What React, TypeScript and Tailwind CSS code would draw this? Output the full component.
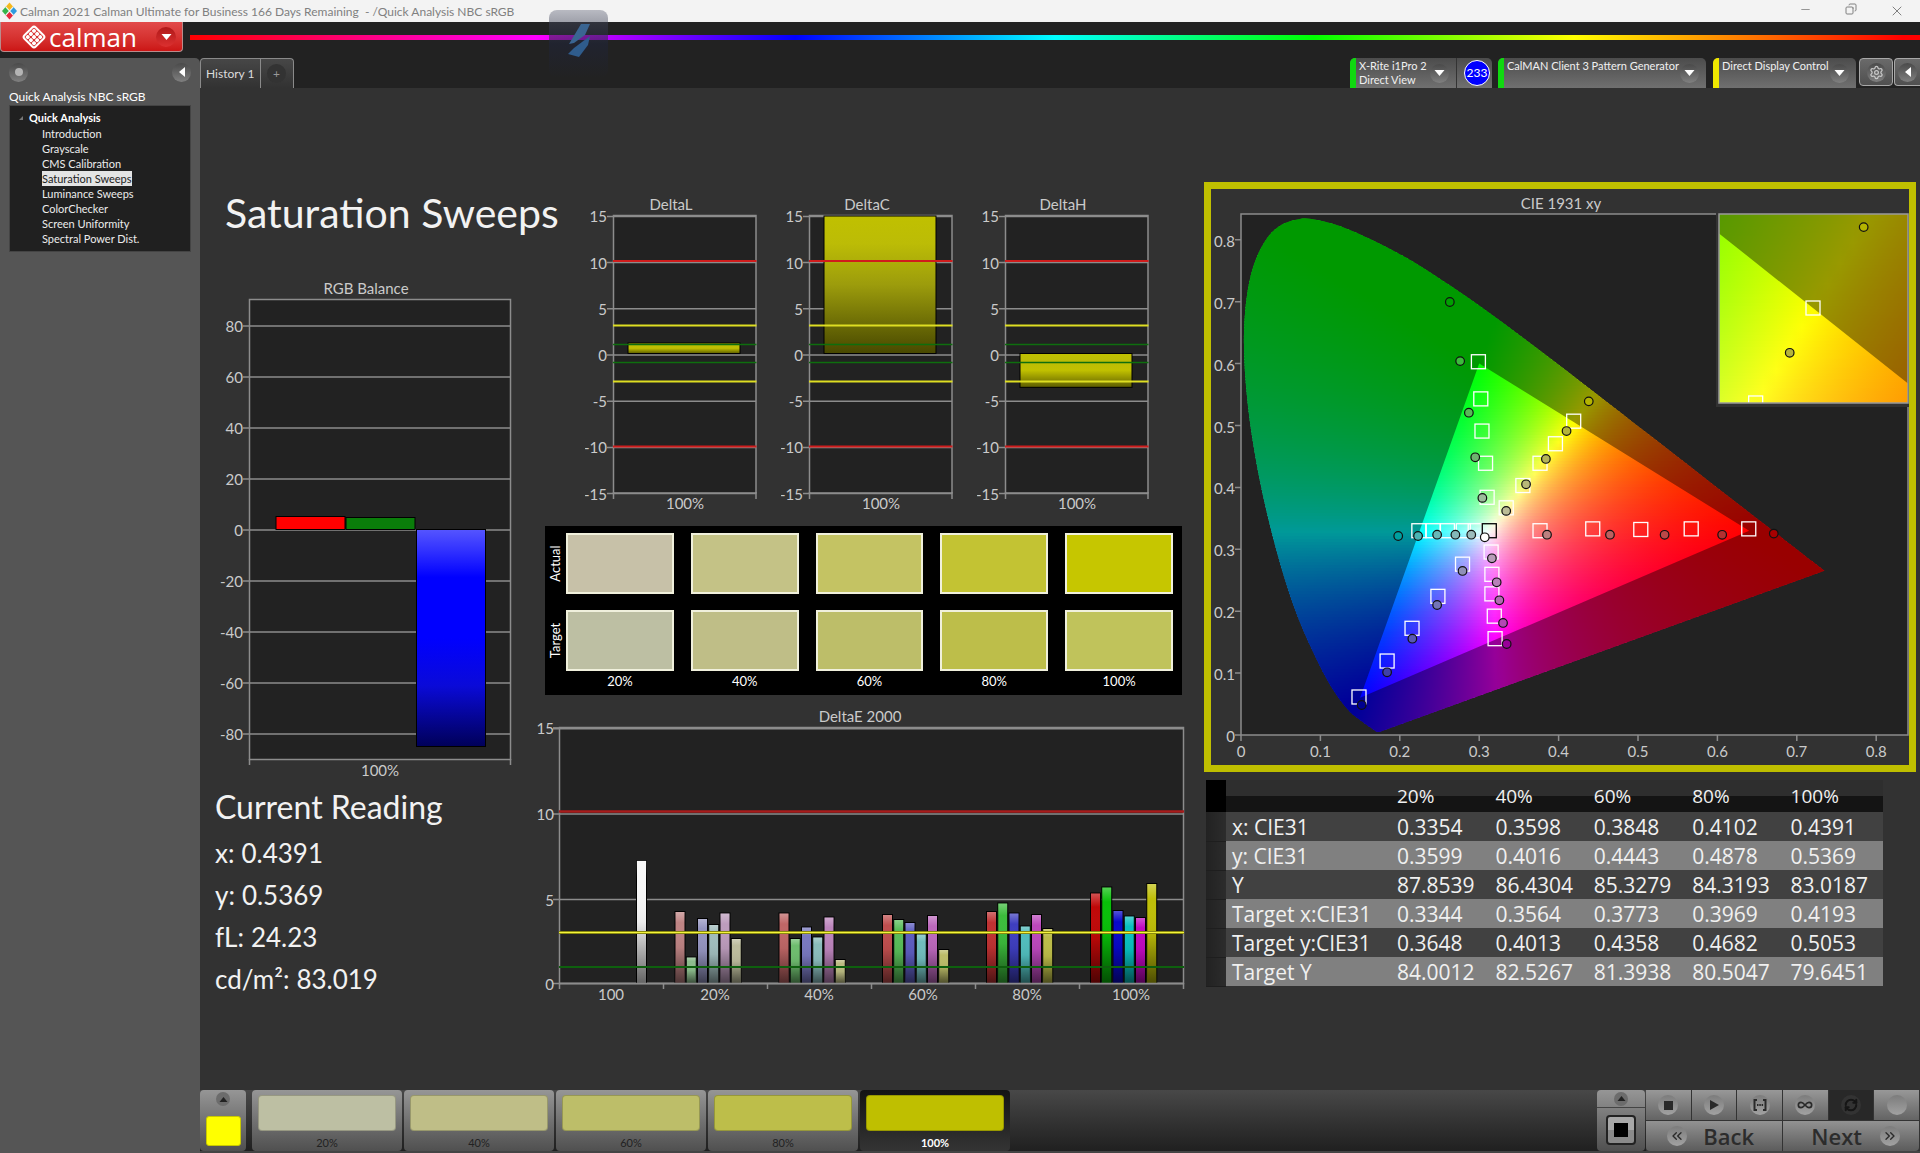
import React from 'react';
import { Copy, Infinity as InfinityIcon, Minus, RefreshCw, Settings, X, ChevronsLeft, ChevronsRight } from 'lucide-react';

const sections = [
  'Introduction',
  'Grayscale',
  'CMS Calibration',
  'Saturation Sweeps',
  'Luminance Sweeps',
  'ColorChecker',
  'Screen Uniformity',
  'Spectral Power Dist.',
];

const levels = ['20%', '40%', '60%', '80%', '100%'];
const actualColors = ['#c7c1a8', '#c4c286', '#c4c363', '#c3c333', '#c6c600'];
const targetColors = ['#bdbfa3', '#bfbe87', '#bdbe69', '#bdbe4a', '#c0c35b'];
const stepColors = ['#bdbfa3', '#bfbe87', '#bdbe69', '#bdbe4a', '#bfbf00'];

const tableRows = [
  ['x: CIE31', '0.3354', '0.3598', '0.3848', '0.4102', '0.4391'],
  ['y: CIE31', '0.3599', '0.4016', '0.4443', '0.4878', '0.5369'],
  ['Y', '87.8539', '86.4304', '85.3279', '84.3193', '83.0187'],
  ['Target x:CIE31', '0.3344', '0.3564', '0.3773', '0.3969', '0.4193'],
  ['Target y:CIE31', '0.3648', '0.4013', '0.4358', '0.4682', '0.5053'],
  ['Target Y', '84.0012', '82.5267', '81.3938', '80.5047', '79.6451'],
];

const readings = [
  ['x:', '0.4391'],
  ['y:', '0.5369'],
  ['fL:', '24.23'],
  ['cd/m²:', '83.019'],
];

/* ---------- Window chrome ---------- */

const TitleBar: React.FC = () => (
  <div className="flex h-[22px] items-center bg-[#f3f3f3] pl-[2px] text-[#808080]">
    <svg className="h-[18px] w-[15px]" viewBox="0 0 16 18" aria-hidden="true">
      <path d="M8 0l4 4.500-4 4.500-4-4.500z" fill="#f5b81c" />
      <path d="M4 4.500l4 4.500-4 4.500-4-4.500z" fill="#35b34a" />
      <path d="M12 4.500l4 4.500-4 4.500-4-4.500z" fill="#2f9be0" />
      <path d="M8 9l4 4.500-4 4.500-4-4.500z" fill="#e5283c" />
      <path d="M4 4.500l8 9M12 4.500l-8 9" stroke="#f3f3f3" strokeWidth="1.200" />
    </svg>
    <span className="ml-[3px] flex-1 whitespace-pre pt-px text-[12px]">
      Calman 2021 Calman Ultimate for Business 166 Days Remaining  - /Quick Analysis NBC sRGB
    </span>
    <div className="flex">
      <button aria-label="Minimize" className="flex w-[46px] justify-center"><Minus size={13} strokeWidth={1.5} /></button>
      <button aria-label="Restore" className="flex w-[46px] justify-center"><Copy size={12} strokeWidth={2} className="rotate-90" /></button>
      <button aria-label="Close" className="flex w-[46px] justify-center"><X size={16} strokeWidth={1.5} /></button>
    </div>
  </div>
);

const Round: React.FC<{ children?: React.ReactNode }> = ({ children }) => (
  <span className="flex size-[19px] shrink-0 items-center justify-center rounded-full bg-linear-to-b from-[#4a4a4a] to-[#808080]">
    {children}
  </span>
);

const Caret: React.FC = () => (
  <svg className="h-[6px] w-[11px]" viewBox="0 0 10 6" aria-hidden="true">
    <path d="M0 0h10l-5 6z" fill="#fff" />
  </svg>
);

const LeftArrow: React.FC = () => (
  <svg className="h-[10px] w-[6px]" viewBox="0 0 6 10" aria-hidden="true">
    <path d="M6 0v10l-6-5z" fill="#fff" />
  </svg>
);

const LogoMark: React.FC = () => (
  <svg className="size-[24px]" viewBox="0 0 24 24" aria-hidden="true">
    <g transform="rotate(45 12 12)">
      <rect x="4" y="4" width="16" height="16" rx="2.500" fill="none" stroke="#fff" strokeWidth="2" />
      {[5.8, 10.2, 14.6].map((x) =>
        [5.8, 10.2, 14.6].map((y) => <rect key={`${x}-${y}`} x={x} y={y} width="3.700" height="3.700" rx="1.300" fill="#fff" />),
      )}
    </g>
  </svg>
);

const DeviceTab: React.FC<{ name: string; mode?: string; accent: string; className: string }> = ({ name, mode, accent, className }) => (
  <button className={`flex h-[30px] items-stretch overflow-hidden rounded-t-[5px] bg-linear-to-b from-[#4c4c4c] to-[#707070] text-left ${className}`}>
    <span className={`w-[6px] ${accent}`} />
    <span className="flex-1 whitespace-nowrap pl-[3px] pt-px text-[11px] leading-[14px] text-[#f0f0f0]">
      {name}
      <br />
      {mode}
    </span>
    <span className="flex items-center pr-[7px]"><Round><Caret /></Round></span>
  </button>
);

const Header: React.FC = () => (
  <header className="relative flex h-9">
    <button className="flex h-[30px] w-[183px] items-center rounded-b-[4px] border border-t-0 border-[#b98c8c] bg-linear-to-b from-[#e24a4a] to-[#cc1414] pl-[21px] text-white">
      <LogoMark />
      <span className="ml-[3px] flex-1 text-left font-['Open_Sans',sans-serif] text-[26px] leading-[26px]">calman</span>
      <span className="mr-[6px] flex size-[20px] items-center justify-center rounded-full bg-linear-to-b from-[#b01818] to-[#dc3030]"><Caret /></span>
    </button>
    <div className="ml-[7px] mt-[13px] h-[5px] flex-1 bg-[linear-gradient(90deg,#ff0000_0%,#ff00ff_20%,#0000ff_35%,#00ffff_50%,#00ff00_65%,#ffff00_80%,#ff0000_99%)]" />
    {/* Floating recorder badge, hangs over the title bar */}
    <div className="absolute -top-3 left-[549px] flex h-[68px] w-[59px] justify-center rounded-[8px] bg-linear-to-b from-[#606478]/40 via-[#202438]/60 to-[#202228]/0 pt-[14px]">
      <svg className="h-[33px] w-[26px]" viewBox="0 0 26 33" aria-hidden="true">
        <path d="M15 0h9l-5 11-11 8-5 1z" fill="#3a6592" />
        <path d="M24 12l-2 9-9 12-11-3 6-6z" fill="#2f5c8c" />
      </svg>
    </div>
  </header>
);

const Toolbar: React.FC = () => (
  <div className="flex h-[30px] justify-between">
    <div className="flex rounded-t-[4px] border border-b-0 border-[#8a8a8a] bg-linear-to-b from-[#474747] to-[#323232] text-[12px] text-[#dcdcdc]">
      <button className="border-r border-[#8a8a8a] px-[5px]">History 1</button>
      <button aria-label="Add history" className="flex w-[32px] items-center justify-center">
        <span className="flex size-[19px] items-center justify-center rounded-full bg-[#333333] text-[#999999]">+</span>
      </button>
    </div>
    <div className="flex">
      <DeviceTab name="X-Rite i1Pro 2" mode="Direct View" accent="bg-[#10d810]" className="w-[106px] rounded-tr-none" />
      <span className="flex w-[36px] items-center justify-end rounded-tr-[5px] border-l border-[#333333] bg-linear-to-b from-[#4c4c4c] to-[#707070] pr-[2px]">
        <span className="flex size-[26px] items-center justify-center rounded-full border border-white bg-[#0000ff] text-[12px] text-white">233</span>
      </span>
      <DeviceTab name="CalMAN Client 3 Pattern Generator" accent="bg-[#10d810]" className="ml-[6px] w-[208px]" />
      <DeviceTab name="Direct Display Control" accent="bg-[#f0e800]" className="ml-[7px] w-[143px]" />
      <button aria-label="Settings" className="ml-[3px] flex h-[28px] w-[34px] items-center justify-center rounded-[4px] border border-[#a8a8a8] bg-linear-to-b from-[#6a6a6a] to-[#505050]">
        <Round><Settings size={15} color="#c8c8c8" /></Round>
      </button>
      <button aria-label="Collapse toolbar" className="ml-px flex h-[28px] w-[26px] items-center justify-center rounded-l-[4px] border border-r-0 border-[#a8a8a8] bg-linear-to-b from-[#6a6a6a] to-[#505050]">
        <Round><LeftArrow /></Round>
      </button>
    </div>
  </div>
);

const Sidebar: React.FC = () => (
  <aside className="w-[200px] shrink-0 rounded-tr-[5px] bg-[#555555] px-[9px]">
    <div className="flex h-[28px] items-center justify-between">
      <Round><span className="size-[8px] rounded-full bg-[#b4b4b4]" /></Round>
      <button aria-label="Collapse sidebar"><Round><LeftArrow /></Round></button>
    </div>
    <h2 className="mt-[2px] text-[12px] leading-[17px] text-white">Quick Analysis NBC sRGB</h2>
    <nav className="h-[147px] border border-[#444444] bg-[#202020] pt-1 text-[11px] text-[#ececec]">
      <div className="flex items-center pl-[9px] font-bold leading-[16px] text-white">
        <svg className="mr-[6px] size-[4px]" viewBox="0 0 4 4" aria-hidden="true"><path d="M4 0v4h-4z" fill="#777" /></svg>
        Quick Analysis
      </div>
      <ul className="pl-[32px]">
        {sections.map((name) => (
          <li key={name} className="h-[15px] leading-[15px]">
            <a href="#" className={name === 'Saturation Sweeps' ? 'inline-block bg-[#e4e4e4] text-[#222222]' : ''}>{name}</a>
          </li>
        ))}
      </ul>
    </nav>
  </aside>
);

/* ---------- Charts ---------- */

const axis = '#8c8c8c';

const Label: React.FC<{ x: number; y: number; anchor?: 'middle' | 'end'; children: React.ReactNode }> = ({ x, y, anchor = 'middle', children }) => (
  <text x={x} y={y} textAnchor={anchor} fill="#cacaca" className="text-[15px]">{children}</text>
);

const RgbBalance: React.FC = () => {
  const y = (v: number) => 258 - v * 2.55;
  return (
    <svg className="block w-full" viewBox="0 0 337 512" role="img" aria-label="RGB Balance">
      <defs>
        <linearGradient id="blueBar" x2="0" y2="1">
          <stop offset="0" stopColor="#5555ff" />
          <stop offset="0.1" stopColor="#3030ff" />
          <stop offset="0.22" stopColor="#0000ff" />
          <stop offset="0.5" stopColor="#0000ff" />
          <stop offset="0.72" stopColor="#0a0ad8" />
          <stop offset="1" stopColor="#000058" />
        </linearGradient>
      </defs>
      <Label x={166} y={22}>RGB Balance</Label>
      <rect x="49.500" y="27.500" width="261" height="460" fill="#222" stroke={axis} strokeWidth="1.500" />
      {[80, 60, 40, 20, 0, -20, -40, -60, -80].map((v) => (
        <g key={v}>
          <path d={`M43 ${y(v)}H310`} stroke={axis} strokeWidth="1.500" />
          <Label x={43} y={y(v) + 6} anchor="end">{v}</Label>
        </g>
      ))}
      <path d="M49.500 487v6M310.500 487v6" stroke={axis} strokeWidth="1.500" />
      <rect x="76" y="244.500" width="69" height="13" fill="#f00" stroke="#000" />
      <rect x="146" y="245.500" width="69" height="12" fill="#0a7d0a" stroke="#000" />
      <rect x="216.500" y="257.500" width="69" height="217" fill="url(#blueBar)" stroke="#000" />
      <Label x={180} y={504}>100%</Label>
    </svg>
  );
};

const DeltaChart: React.FC<{ title: string; value: number }> = ({ title, value }) => {
  const y = (v: number) => 161 - v * 9.24;
  const top = value > 0 ? Math.max(y(value), 22) : 159.5;
  const bottom = value > 0 ? 159.5 : y(value);
  return (
    <svg className="block w-full" viewBox="0 0 196 322" role="img" aria-label={title}>
      <defs>
        <linearGradient id={`${title}Bar`} x2="0" y2="1">
          <stop offset="0" stopColor="#c0c000" />
          <stop offset="0.2" stopColor="#bcbc06" />
          <stop offset="0.5" stopColor={value > 10 ? '#9c9c0c' : '#c0c000'} />
          <stop offset="1" stopColor={value > 10 ? '#484800' : '#5c5c00'} />
        </linearGradient>
      </defs>
      <Label x={86} y={16}>{title}</Label>
      <rect x="28.500" y="21.500" width="142.500" height="277.500" fill="#222" stroke={axis} strokeWidth="1.500" />
      {[15, 10, 5, 0, -5, -10, -15].map((v) => (
        <g key={v}>
          <path d={`M22 ${y(v)}H171`} stroke={axis} strokeWidth="1.500" />
          <Label x={22} y={y(v) + 6} anchor="end">{v}</Label>
        </g>
      ))}
      <path d="M28.500 298v7M171 298v7" stroke={axis} strokeWidth="1.500" />
      <rect x="43" y={top} width="112" height={bottom - top} fill={`url(#${title}Bar)`} stroke="#000" />
      <path d="M28 67H171.500M28 252.500H171.500" stroke="#d01c1c" strokeWidth="2" />
      <path d="M28 131.500H171.500M28 187.500H171.500" stroke="#dede22" strokeWidth="2" />
      <path d="M28 150.500H171.500M28 168.500H171.500" stroke="#0e6e0e" strokeWidth="1.500" />
      <Label x={100} y={315}>100%</Label>
    </svg>
  );
};

const SwatchRow: React.FC<{ label: string; colors: string[] }> = ({ label, colors }) => (
  <div className="flex h-[61px]">
    <div className="flex w-[21px] items-center justify-center">
      <span className="-rotate-90 text-[13px] leading-none text-white">{label}</span>
    </div>
    <div className="grid flex-1 grid-cols-5 gap-[17px]">
      {colors.map((c) => (
        <div key={c} className="border-2 border-[#f0f0dc]" style={{ backgroundColor: c }} />
      ))}
    </div>
  </div>
);

const Swatches: React.FC = () => (
  <div className="ml-2 mr-[22px] mt-[10px] bg-black pb-[5px] pr-[9px] pt-[7px]">
    <SwatchRow label="Actual" colors={actualColors} />
    <div className="h-4" />
    <SwatchRow label="Target" colors={targetColors} />
    <div className="grid grid-cols-5 gap-[17px] pl-[21px] pt-px text-center text-[13px] leading-[18px] text-white">
      {levels.map((l) => <span key={l}>{l}</span>)}
    </div>
  </div>
);

const deltaE = [
  { x: 138, tops: [213.5, 259, 220.5, 226.5, 215, 240.5], colors: ['#bf8484', '#8cbc8c', '#9494bf', '#a0bcbc', '#bc9cbc', '#bcbc9c'] },
  { x: 242, tops: [215, 240.5, 229, 239, 219, 261.5], colors: ['#bf6666', '#6ebc6e', '#7878bf', '#8abcbc', '#bc84bc', '#bcbc82'] },
  { x: 345.5, tops: [216.5, 221.5, 224.5, 236, 217.5, 251.5], colors: ['#bf4e4e', '#58bc58', '#5c5cbf', '#70bcbc', '#bc68bc', '#bcbc68'] },
  { x: 449.5, tops: [213.5, 205, 215, 228, 216.5, 230.5], colors: ['#bf3232', '#3cbc3c', '#3e3ebf', '#50bcbc', '#bc48bc', '#bcbc48'] },
  { x: 553.5, tops: [195, 189, 212.5, 218, 219.5, 185.5], colors: ['#bf0808', '#08bf08', '#0808c8', '#08bfbf', '#bf08bf', '#bfbf08'] },
];

const DeltaE2000: React.FC = () => (
  <svg className="mt-[3px] block w-full" viewBox="0 0 667 310" role="img" aria-label="DeltaE 2000">
    <defs>
      <linearGradient id="shade" x2="0" y2="1">
        <stop offset="0" stopColor="#fff" stopOpacity="0.3" />
        <stop offset="0.15" stopColor="#fff" stopOpacity="0" />
        <stop offset="0.5" stopColor="#000" stopOpacity="0.05" />
        <stop offset="1" stopColor="#000" stopOpacity="0.6" />
      </linearGradient>
    </defs>
    <Label x={323} y={24}>DeltaE 2000</Label>
    <rect x="22.500" y="29.500" width="624" height="256" fill="#222" stroke={axis} strokeWidth="1.500" />
    <path d="M16 30.500H647" stroke={axis} strokeWidth="2" />
    {[[15, 30], [10, 116], [5, 201.5], [0, 285.5]].map(([v, y]) => (
      <g key={v}>
        <path d={`M16 ${y}H646`} stroke={axis} strokeWidth="1.500" />
        <Label x={17} y={y + 6} anchor="end">{v}</Label>
      </g>
    ))}
    <rect x="99.500" y="162.500" width="10" height="123" fill="#f8f8f8" stroke="#000" />
    <rect x="99.500" y="162.500" width="10" height="123" fill="url(#shade)" />
    {deltaE.map((group) =>
      group.tops.map((top, i) => (
        <g key={`${group.x}-${i}`}>
          <rect x={group.x + i * 11.25} y={top} width="10" height={285.5 - top} fill={group.colors[i]} stroke="#000" />
          <rect x={group.x + i * 11.25 + 0.5} y={top + 0.5} width="9" height={285 - top} fill="url(#shade)" />
        </g>
      )),
    )}
    <path d="M22 113.500H647" stroke="#a81c1c" strokeWidth="2.500" />
    <path d="M22 234.500H647" stroke="#6a6a00" strokeWidth="3" />
    <path d="M22 234.500H647" stroke="#f4f43c" strokeWidth="1.400" />
    <path d="M22 269H647" stroke="#0e600e" strokeWidth="2" />
    <path d="M22 285.500H647" stroke={axis} strokeWidth="1.500" />
    {[0, 1, 2, 3, 4, 5, 6].map((i) => (
      <path key={i} d={`M${22.5 + i * 104} 285v6`} stroke={axis} strokeWidth="1.500" />
    ))}
    {['100', ...levels].map((l, i) => (
      <Label key={l} x={74 + i * 104} y={302}>{l}</Label>
    ))}
  </svg>
);

/* ---------- CIE diagram ---------- */

const locus = [
  [0.1741, 0.005], [0.1714, 0.0051], [0.1689, 0.0069], [0.1644, 0.0109], [0.1566, 0.0177], [0.144, 0.0297],
  [0.1355, 0.0399], [0.1241, 0.0578], [0.1096, 0.0868], [0.0913, 0.1327], [0.0687, 0.2007], [0.0454, 0.295],
  [0.0235, 0.4127], [0.0082, 0.5384], [0.0039, 0.6548], [0.0139, 0.7502], [0.0389, 0.812], [0.0743, 0.8338],
  [0.1142, 0.8262], [0.1547, 0.8059], [0.1929, 0.7816], [0.2296, 0.7543], [0.3016, 0.6923], [0.3731, 0.6245],
  [0.4441, 0.5547], [0.5125, 0.4866], [0.5752, 0.4242], [0.627, 0.3725], [0.6658, 0.334], [0.6915, 0.3083],
  [0.719, 0.2809], [0.7347, 0.2653],
];
const gamut = [[0.64, 0.33], [0.3, 0.6], [0.15, 0.06]];

// RGB of a chromaticity, scaled so its largest channel is full
const chroma = (x: number, y: number) => {
  const yy = Math.max(y, 0.001);
  const X = x / yy;
  const Z = (1 - x - yy) / yy;
  const rgb = [
    3.2406 * X - 1.5372 - 0.4986 * Z,
    -0.9689 * X + 1.8758 + 0.0415 * Z,
    0.0557 * X - 0.204 + 1.057 * Z,
  ].map((c) => Math.max(c, 0));
  const peak = Math.max(...rgb);
  return `rgb(${rgb.map((c) => Math.round((255 * c) / peak)).join(',')})`;
};

interface Scale {
  x: (v: number) => number;
  y: (v: number) => number;
}

const toPath = (points: number[][], s: Scale) => `M${points.map(([x, y]) => `${s.x(x).toFixed(2)} ${s.y(y).toFixed(2)}`).join('L')}Z`;

// Smooth closed curve; the purple line between the two ends stays straight
const toCurve = (p: number[][], s: Scale) => {
  const q = p.map(([x, y]) => [s.x(x), s.y(y)]);
  let d = `M${q[0].join(' ')}`;
  for (let i = 0; i < q.length - 1; i++) {
    const a = q[Math.max(i - 1, 0)];
    const b = q[i];
    const c = q[i + 1];
    const e = q[Math.min(i + 2, q.length - 1)];
    d += `C${b[0] + (c[0] - a[0]) / 6} ${b[1] + (c[1] - a[1]) / 6} ${c[0] - (e[0] - b[0]) / 6} ${c[1] - (e[1] - b[1]) / 6} ${c[0]} ${c[1]}`;
  }
  return `${d}Z`;
};

interface FieldProps {
  id: string;
  scale: Scale;
  xRange: [number, number];
  yRange: [number, number];
  rows: number;
  cols: number;
}

const ChromaField: React.FC<FieldProps> = ({ id, scale, xRange, yRange, rows, cols }) => {
  const [x0, x1] = xRange;
  const [y0, y1] = yRange;
  const step = (y1 - y0) / rows;
  const height = scale.y(0) - scale.y(step);
  return (
    <g>
      <defs>
        <clipPath id={`${id}Locus`}><path d={toCurve(locus, scale)} /></clipPath>
      </defs>
      <g clipPath={`url(#${id}Locus)`}>
        {Array.from({ length: rows }, (_, r) => {
          const y = y0 + (r + 0.5) * step;
          return (
            <g key={r}>
              <linearGradient id={`${id}${r}`}>
                {Array.from({ length: cols + 1 }, (_, c) => (
                  <stop key={c} offset={c / cols} stopColor={chroma(x0 + ((x1 - x0) * c) / cols, y)} />
                ))}
              </linearGradient>
              <rect x={scale.x(x0)} y={scale.y(y + step / 2) - 0.5} width={scale.x(x1) - scale.x(x0)} height={height + 1} fill={`url(#${id}${r})`} />
            </g>
          );
        })}
        <path d={`M-3000 -3000H6000V6000H-3000Z${toPath(gamut, scale)}`} fillRule="evenodd" fill="#000" fillOpacity="0.4" />
      </g>
    </g>
  );
};

const targets = [
  [0.299, 0.603], [0.302, 0.543], [0.3035, 0.491], [0.308, 0.439], [0.31, 0.384],
  [0.419, 0.507], [0.396, 0.4705], [0.3766, 0.439], [0.355, 0.403], [0.334, 0.367],
  [0.3766, 0.33], [0.443, 0.333], [0.5035, 0.332], [0.567, 0.333], [0.6395, 0.333],
  [0.224, 0.33], [0.242, 0.33], [0.26, 0.33], [0.28, 0.33], [0.295, 0.33],
  [0.315, 0.2956], [0.316, 0.2596], [0.316, 0.228], [0.319, 0.192], [0.32, 0.1556],
  [0.279, 0.276], [0.248, 0.224], [0.2154, 0.1724], [0.184, 0.1195], [0.1486, 0.0614],
];

const measured: [number, number, string][] = [
  [0.263, 0.6995, '#00a000'], [0.276, 0.604, '#3cbc3c'], [0.287, 0.5207, '#58b858'], [0.295, 0.4486, '#6eb46e'], [0.304, 0.383, '#9cbc9c'],
  [0.438, 0.539, '#b4b400'], [0.41, 0.491, '#b4b43c'], [0.384, 0.446, '#b4b458'], [0.359, 0.405, '#b8b878'], [0.334, 0.362, '#bcbc96'],
  [0.198, 0.3215, '#00a0a0'], [0.223, 0.3215, '#48b4b4'], [0.247, 0.3236, '#68b8b8'], [0.27, 0.3236, '#84b8b8'], [0.29, 0.3236, '#9cbcbc'],
  [0.3854, 0.3236, '#bc8080'], [0.4647, 0.3236, '#bc6060'], [0.5335, 0.3234, '#bc4848'], [0.606, 0.3234, '#b43030'], [0.671, 0.3254, '#a80000'],
  [0.316, 0.2855, '#b89cb8'], [0.322, 0.2467, '#b880b8'], [0.3254, 0.2176, '#b468b4'], [0.33, 0.181, '#b448b4'], [0.3346, 0.147, '#980098'],
  [0.279, 0.265, '#9090b8'], [0.247, 0.21, '#7474b8'], [0.2158, 0.1556, '#5858b4'], [0.184, 0.1013, '#4040a8'], [0.152, 0.0485, '#000090'],
  [0.307, 0.3194, '#ffffff'],
];

const TargetMark: React.FC<{ x: number; y: number; color?: string }> = ({ x, y, color = '#fff' }) => (
  <rect x={x - 7} y={y - 7} width="14" height="14" fill="none" stroke={color} strokeWidth="1.300" />
);

const MeasuredMark: React.FC<{ x: number; y: number; fill: string }> = ({ x, y, fill }) => (
  <circle cx={x} cy={y} r="4.300" fill={fill} stroke="#111" strokeWidth="1.200" />
);

const CieDiagram: React.FC = () => {
  const main: Scale = { x: (v) => 30 + v * 794, y: (v) => 546 - v * 619 };
  const zoom: Scale = { x: (v) => 602 + (v - 0.4193) * 2560, y: (v) => 119 - (v - 0.5053) * 2560 };
  return (
    <div className="mr-1 border-[7px] border-[#bfbf00]">
      <svg className="block w-full" viewBox="0 0 698 576" role="img" aria-label="CIE 1931 xy">
        <defs>
          <clipPath id="insetArea"><rect x="508" y="25" width="189" height="189" /></clipPath>
        </defs>
        <Label x={350} y={20}>CIE 1931 xy</Label>
        <rect x="30" y="25" width="667" height="521" fill="#222" stroke={axis} strokeWidth="1.500" />
        <ChromaField id="cie" scale={main} xRange={[0, 0.75]} yRange={[0, 0.84]} rows={180} cols={75} />
        {Array.from({ length: 9 }, (_, i) => (
          <g key={i}>
            <path d={`M${main.x(i / 10)} 546v6M24 ${main.y(i / 10)}h6`} stroke={axis} strokeWidth="1.500" />
            <Label x={main.x(i / 10)} y={568}>{i / 10}</Label>
            <Label x={24} y={main.y(i / 10) + 7} anchor="end">{i / 10}</Label>
          </g>
        ))}
        {targets.map(([x, y]) => <TargetMark key={`${x}-${y}`} x={main.x(x)} y={main.y(y)} />)}
        <TargetMark x={main.x(0.3127)} y={main.y(0.33)} color="#000" />
        {measured.map(([x, y, fill]) => <MeasuredMark key={`${x}-${y}`} x={main.x(x)} y={main.y(y)} fill={fill} />)}

        <rect x="505" y="22" width="193" height="196" fill="#323232" />
        <g clipPath="url(#insetArea)">
          <ChromaField id="zoom" scale={zoom} xRange={[0.38, 0.46]} yRange={[0.464, 0.544]} rows={70} cols={16} />
          <TargetMark x={zoom.x(0.4193)} y={zoom.y(0.5053)} />
          <TargetMark x={zoom.x(0.3969)} y={zoom.y(0.4682)} />
          <MeasuredMark x={zoom.x(0.4391)} y={zoom.y(0.5369)} fill="#b4b400" />
          <MeasuredMark x={zoom.x(0.4102)} y={zoom.y(0.4878)} fill="#b4b43c" />
        </g>
        <rect x="508" y="25" width="189" height="189" fill="none" stroke="#9a9a9a" strokeWidth="1.500" />
      </svg>
    </div>
  );
};

const DataTable: React.FC = () => (
  <table className="ml-[2px] mt-2 w-[calc(100%-39px)] table-fixed border-collapse text-left font-['Open_Sans',sans-serif] text-[21px] leading-[28px] text-[#f0f0f0]">
    <colgroup>
      <col className="w-[20px]" />
      <col className="w-[165px]" />
    </colgroup>
    <thead>
      <tr className="h-8 bg-[linear-gradient(#2e2e2e_50%,#141414_50%)] text-[19px]">
        <td className="bg-black" />
        <td />
        {levels.map((l) => <th key={l} scope="col" className="pl-[6px] font-normal">{l}</th>)}
      </tr>
    </thead>
    <tbody>
      {tableRows.map(([name, ...values], i) => (
        <tr key={name} className={`h-[29px] ${i % 2 ? 'bg-[#808080]' : 'bg-[#414141]'}`}>
          <td className="border-b border-[#1e1e1e] bg-linear-to-r from-[#222222] to-[#2c2c2c]" />
          <th scope="row" className="whitespace-nowrap pl-[6px] font-normal">{name}</th>
          {values.map((v) => <td key={v} className="pl-[6px]">{v}</td>)}
        </tr>
      ))}
    </tbody>
  </table>
);

/* ---------- Bottom bar ---------- */

const Knob: React.FC<{ dark?: boolean; children?: React.ReactNode }> = ({ dark, children }) => (
  <span className={`flex size-[20px] items-center justify-center rounded-full text-[#2a2a2a] ${dark ? 'bg-[#333333]' : 'bg-linear-to-b from-[#7c7c7c] to-[#a2a2a2]'}`}>
    {children}
  </span>
);

const UpArrow: React.FC = () => (
  <span className="flex size-[14px] items-center justify-center rounded-full bg-[#6c6c6c]">
    <svg className="h-[5px] w-[9px]" viewBox="0 0 8 5" aria-hidden="true"><path d="M4 0l4 5h-8z" fill="#222" /></svg>
  </span>
);

const controls = [
  { name: 'Stop', icon: <span className="size-[9px] bg-[#2a2a2a]" /> },
  { name: 'Play', icon: <svg className="size-[10px]" viewBox="0 0 10 10"><path d="M1 0l9 5-9 5z" fill="#2a2a2a" /></svg> },
  {
    name: 'Read series',
    icon: (
      <svg className="h-[12px] w-[14px]" viewBox="0 0 14 12" fill="none" stroke="#2a2a2a" strokeWidth="2">
        <path d="M4 1H1.500v10H4M10 1h2.500v10H10M4 6h1.500M6.300 6h1.500M8.600 6h1.500" />
      </svg>
    ),
  },
  { name: 'Read continuously', icon: <InfinityIcon size={16} strokeWidth={2.5} /> },
  { name: 'Refresh', icon: <RefreshCw size={14} strokeWidth={3.5} color="#161616" />, dark: true },
  { name: 'Record', icon: null },
];

const BottomBar: React.FC = () => (
  <footer className="flex h-[63px] border-b-2 border-[#444444] bg-linear-to-b from-[#484848] to-[#202020]">
    <button aria-label="Pattern color" className="flex w-[46px] flex-col items-center justify-between rounded-[4px] bg-linear-to-b from-[#969696] to-[#505050] pb-[5px] pt-[2px]">
      <UpArrow />
      <span className="h-[30px] w-[35px] rounded-[3px] border border-[#c8c800] bg-[#ffff00]" />
    </button>
    <div className="ml-[6px] flex gap-[2px]">
      {levels.map((l, i) => {
        const active = i === levels.length - 1;
        return (
          <button
            key={l}
            className={`flex w-[150px] flex-col rounded-[4px] px-[6px] pt-[5px] text-center text-[11px] leading-[14px] ${active ? 'bg-linear-to-b from-[#141414] to-[#343434] font-bold text-white' : 'bg-linear-to-b from-[#969696] to-[#505050] text-[#222222]'}`}
          >
            <span className="h-[36px] w-full rounded-[4px] border border-black/20" style={{ backgroundColor: stepColors[i] }} />
            <span className="mt-[5px] w-full">{l}</span>
          </button>
        );
      })}
    </div>
    <div className="ml-auto flex w-[48px] flex-col rounded-[4px] bg-linear-to-b from-[#969696] to-[#505050]">
      <button aria-label="More options" className="flex h-[18px] w-full items-center justify-center border-b border-[#444444]"><UpArrow /></button>
      <button aria-label="Pattern window" className="m-auto flex size-[30px] items-center justify-center rounded-[4px] border-2 border-[#222222] bg-[linear-gradient(#a8a8a8_50%,#8a8a8a_50%)]">
        <span className="size-[14px] bg-black" />
      </button>
    </div>
    <div className="ml-px flex w-[274px] flex-col gap-px bg-[#333333] pr-px">
      <div className="grid h-[30px] grid-cols-6 gap-px">
        {controls.map((c) => (
          <button key={c.name} aria-label={c.name} className={`flex items-center justify-center ${c.dark ? 'bg-[#282828]' : 'bg-linear-to-b from-[#989898] to-[#646464]'}`}>
            <Knob dark={c.dark}>{c.icon}</Knob>
          </button>
        ))}
      </div>
      <div className="grid h-[30px] grid-cols-2 gap-px font-['Open_Sans',sans-serif] text-[22px] font-semibold leading-[28px] text-[#2c2c2c]">
        <button className="flex items-center justify-end gap-[16px] rounded-bl-[4px] bg-linear-to-b from-[#929292] to-[#5c5c5c] pr-[28px]">
          <Knob><ChevronsLeft size={16} /></Knob>Back
        </button>
        <button className="flex items-center justify-end gap-[18px] rounded-br-[4px] bg-linear-to-b from-[#929292] to-[#5c5c5c] pr-[19px]">
          Next<Knob><ChevronsRight size={16} /></Knob>
        </button>
      </div>
    </div>
  </footer>
);

const App: React.FC = () => {
  return (
    <div className="flex min-h-screen flex-col overflow-hidden bg-[#222222] font-['Lato','Liberation_Sans',sans-serif]">
      <TitleBar />
      <Header />
      <div className="flex flex-1">
        <Sidebar />
        <div className="flex min-w-0 flex-1 flex-col">
          <Toolbar />
          <main className="grid flex-1 grid-cols-[337fr_667fr_716fr] items-start bg-[#323232] pt-[94px]">
            {/* Left: title, balance chart and the current reading */}
            <section className="min-w-0">
              <h1 className="mt-[7px] whitespace-nowrap pl-[25px] text-[41px] leading-[48px] text-[#f2f2f2]">Saturation Sweeps</h1>
              <div className="mt-[35px]"><RgbBalance /></div>
              <div className="pl-[15px] text-[#f2f2f2]">
                <h2 className="mt-[3px] whitespace-nowrap text-[32px] leading-[40px]">Current Reading</h2>
                <dl className="mt-[5px] text-[26px] leading-[42px]">
                  {readings.map(([k, v]) => (
                    <div key={k} className="flex gap-[7px]"><dt>{k}</dt><dd>{v}</dd></div>
                  ))}
                </dl>
              </div>
            </section>

            {/* Middle: delta charts and swatches */}
            <section className="min-w-0">
              <div className="mt-3 grid grid-cols-3 pl-[48px] pr-[31px]">
                <DeltaChart title="DeltaL" value={1.3} />
                <DeltaChart title="DeltaC" value={18} />
                <DeltaChart title="DeltaH" value={-3.5} />
              </div>
              <Swatches />
              <DeltaE2000 />
            </section>

            {/* Right: chromaticity diagram and data */}
            <section className="min-w-0">
              <CieDiagram />
              <DataTable />
            </section>
          </main>
          <BottomBar />
        </div>
      </div>
    </div>
  );
};

export default App;
